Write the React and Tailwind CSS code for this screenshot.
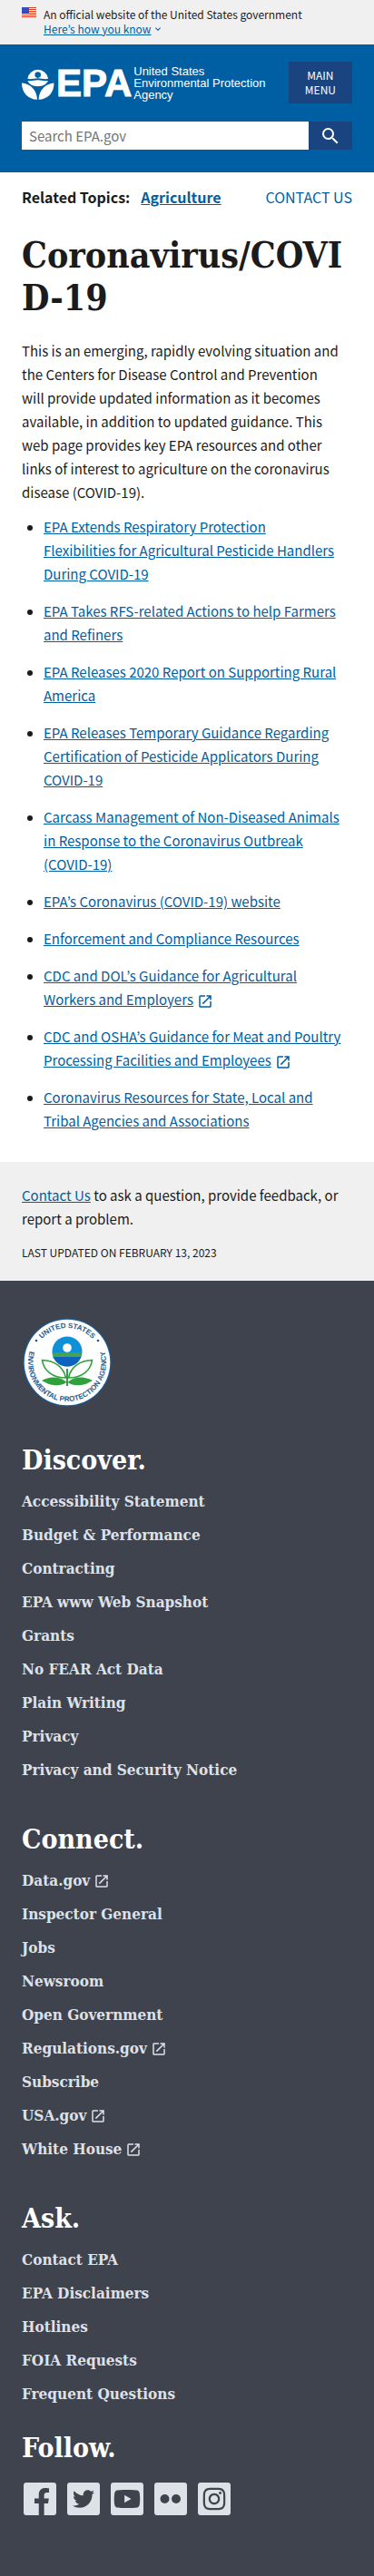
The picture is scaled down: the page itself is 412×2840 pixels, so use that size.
import { FaFacebookF, FaTwitter, FaYoutube, FaInstagram } from "react-icons/fa";
import { MdSearch, MdOpenInNew, MdExpandMore } from "react-icons/md";

const resources = [
  { text: "EPA Extends Respiratory Protection Flexibilities\u00a0for\u00a0Agricultural Pesticide Handlers During COVID-19" },
  { text: "EPA Takes RFS-related Actions to help Farmers and Refiners" },
  { text: "EPA Releases 2020 Report on Supporting Rural America" },
  { text: "EPA Releases Temporary Guidance Regarding Certification of Pesticide Applicators During COVID-19" },
  { text: "Carcass Management of Non-Diseased Animals in Response to the Coronavirus Outbreak (COVID-19)" },
  { text: "EPA’s Coronavirus (COVID-19) website" },
  { text: "Enforcement and Compliance Resources" },
  { text: "CDC and DOL’s Guidance for Agricultural Workers\u00a0and Employers", external: true },
  { text: "CDC and OSHA’s Guidance for Meat and Poultry Processing Facilities and Employees", external: true },
  { text: "Coronavirus Resources for State, Local and Tribal\u00a0Agencies and Associations" },
];

const footerGroups = [
  {
    title: "Discover.",
    links: [
      { text: "Accessibility Statement" },
      { text: "Budget & Performance" },
      { text: "Contracting" },
      { text: "EPA www Web Snapshot" },
      { text: "Grants" },
      { text: "No FEAR Act Data" },
      { text: "Plain Writing" },
      { text: "Privacy" },
      { text: "Privacy and Security Notice" },
    ],
  },
  {
    title: "Connect.",
    links: [
      { text: "Data.gov", external: true },
      { text: "Inspector General" },
      { text: "Jobs" },
      { text: "Newsroom" },
      { text: "Open Government" },
      { text: "Regulations.gov", external: true },
      { text: "Subscribe" },
      { text: "USA.gov", external: true },
      { text: "White House", external: true },
    ],
  },
  {
    title: "Ask.",
    links: [
      { text: "Contact EPA" },
      { text: "EPA Disclaimers" },
      { text: "Hotlines" },
      { text: "FOIA Requests" },
      { text: "Frequent Questions" },
    ],
  },
];

function Flag() {
  return (
    <svg viewBox="0 0 16 11" className="h-[11px] w-4 shrink-0" aria-hidden="true">
      <rect width="16" height="11" fill="#fff" />
      {[0, 2, 4, 6, 8, 10].map((y) => (
        <rect key={y} y={y} width="16" height="1" fill="#db3e1f" />
      ))}
      <rect width="8" height="7" fill="#1e33b1" />
      {[1, 3, 5].map((y) =>
        [1, 3, 5, 7].map((x) => <circle key={`${x}-${y}`} cx={x} cy={y} r="0.45" fill="#fff" />)
      )}
    </svg>
  );
}

function FlowerMark() {
  return (
    <svg viewBox="0 0 36 36" className="h-9 w-9 shrink-0" aria-hidden="true" fill="#fff">
      <path d="M6.300 12.800a11.500 11.500 0 0 1 22.800 0c-4 1-7-.6-11.400-.6s-7.400 1.600-11.400.6z" />
      <circle cx="17.700" cy="8.600" r="3.300" fill="#005ea2" />
      <path d="M6.500 15c4 .6 7-.800 11.200-.800s7.200 1.400 11.200.8c-1.200 3.600-5.400 6.200-11.200 6.200S7.700 18.600 6.500 15z" />
      <path d="M0 17.500c9.500.8 16.500 7.500 17 18.300C7 35.500 0 28.500 0 17.500z" />
      <path d="M35.500 17.500c-9.500.8-16.500 7.500-17 18.300 10-.3 17-7.300 17-18.300z" />
    </svg>
  );
}

function Seal() {
  return (
    <svg viewBox="0 0 100 100" className="h-[100px] w-[100px]" role="img" aria-label="United States Environmental Protection Agency">
      <defs>
        <path id="sealTop" d="M12 50a38 38 0 0 1 76 0" />
        <path id="sealRing" d="M19.600 19.600A43 43 0 1 0 80.400 19.600" />
        <clipPath id="bloom">
          <circle cx="50" cy="38" r="16.500" />
        </clipPath>
      </defs>
      <circle cx="50" cy="50" r="48.500" fill="#1a5f9e" />
      <circle cx="50" cy="50" r="47.300" fill="#fff" />
      <g fill="#1f5a8f" fontFamily="Liberation Sans, sans-serif" fontSize="8" fontWeight="700" textAnchor="middle">
        <text>
          <textPath href="#sealTop" startOffset="50%">UNITED STATES</textPath>
        </text>
        <text>
          <textPath href="#sealRing" startOffset="50%">ENVIRONMENTAL PROTECTION AGENCY</textPath>
        </text>
      </g>
      <circle cx="16" cy="26" r="1.300" fill="#1f5a8f" />
      <circle cx="84" cy="26" r="1.300" fill="#1f5a8f" />
      <g clipPath="url(#bloom)">
        <rect x="30" y="20" width="40" height="40" fill="#1190d8" />
        <path d="M30 40q20-2 40 0v6H30z" fill="#45a356" />
        <rect x="30" y="44" width="40" height="12" fill="#0c62bd" />
      </g>
      <circle cx="50" cy="34" r="4.800" fill="#fff" />
      <path d="M49 57h2v19h-2z" fill="#2fa13c" />
      <g fill="#fff" stroke="#2fa13c" strokeWidth="1.600">
        <path d="M48.500 67C46 55 36 48 22.500 47.500 24 59 34 67 48.500 67z" />
        <path d="M51.500 67C54 55 64 48 77.500 47.500 76 59 66 67 51.500 67z" />
      </g>
      <path d="M49.500 72C42 65 31 65 22 70c9 6 20 7 27.500 2zM50.500 72C58 65 69 65 78 70c-9 6-20 7-27.500 2z" fill="#2fa13c" />
    </svg>
  );
}

function FlickrDots() {
  return (
    <svg viewBox="0 0 36 36" className="h-9 w-9" aria-hidden="true" fill="currentColor">
      <circle cx="11.500" cy="18" r="5" />
      <circle cx="24" cy="18" r="5" />
    </svg>
  );
}

const social = [
  { name: "Facebook", icon: <FaFacebookF className="mt-[6px] ml-1 h-[30px] w-[22px]" /> },
  { name: "Twitter", icon: <FaTwitter className="h-6 w-6" /> },
  { name: "YouTube", icon: <FaYoutube className="h-[30px] w-[30px]" /> },
  { name: "Flickr", icon: <FlickrDots /> },
  { name: "Instagram", icon: <FaInstagram className="h-7 w-7" /> },
];

const link = "text-[#005ea2] underline";

export default function App() {
  return (
    <div className="min-h-screen bg-white font-['Noto_Sans_CJK_KR',sans-serif] text-[15px] leading-[26px] text-[#1b1b1b]">
      <div className="flex gap-2 bg-[#f0f0f0] px-6 pt-2 pb-[9px] text-xs leading-4">
        <Flag />
        <div>
          <p>An official website of the United States government</p>
          <button type="button" className={`flex items-center ${link}`}>
            Here’s how you know
            <MdExpandMore className="ml-[2px] h-3 w-3" />
          </button>
        </div>
      </div>

      <header className="bg-[#005ea2] px-6 pt-[19px] pb-[25px]">
        <div className="flex items-start justify-between">
          <a href="#home" className="mt-1 flex items-center whitespace-nowrap text-white">
            <FlowerMark />
            <span className="ml-[2px] font-['Liberation_Sans',sans-serif] text-[42px] leading-9 font-bold [-webkit-text-stroke:1px_white]">
              EPA
            </span>
            <span className="ml-[2px] font-['Liberation_Sans',sans-serif] text-[13px] leading-[13px]">
              United States
              <br />
              Environmental Protection
              <br />
              Agency
            </span>
          </a>
          <button type="button" className="bg-[#1a4480] px-[18px] py-[7px] text-xs leading-4 text-white">
            MAIN
            <br />
            MENU
          </button>
        </div>
        <form className="mt-5 flex">
          <input
            type="search"
            aria-label="Search EPA.gov"
            placeholder="Search EPA.gov"
            className="h-[31px] min-w-0 flex-1 bg-white px-2 text-[15px] placeholder:text-[#757575]"
          />
          <button type="submit" aria-label="Search" className="flex h-[31px] w-12 items-center justify-center bg-[#1a4480] text-white">
            <MdSearch className="h-6 w-6" />
          </button>
        </form>
      </header>

      <main className="px-6 pt-[14px] pb-8">
        <div className="flex items-center justify-between text-base leading-[26px]">
          <p className="font-bold">
            Related Topics:
            <a href="#agriculture" className={`ml-3 ${link}`}>
              Agriculture
            </a>
          </p>
          <a href="#contact" className="text-[#005ea2]">
            CONTACT US
          </a>
        </div>
        <h1 className="mt-7 font-['DejaVu_Serif_Condensed','DejaVu_Serif',serif] text-[39px] leading-[47px] font-bold break-all">
          Coronavirus/COVID-19
        </h1>
        <p className="mt-[22px]">
          This is an emerging, rapidly evolving situation and the Centers for Disease Control and Prevention
          will{"\u00a0"}provide updated information as it becomes available, in addition to updated guidance. This
          web{"\u00a0"}page provides key EPA resources and other links of interest to agriculture on the coronavirus
          disease (COVID-19).
        </p>
        <ul className="mt-3 flex list-disc flex-col gap-[15px] pl-6">
          {resources.map((item) => (
            <li key={item.text}>
              <a href="#resource" className={link}>
                {item.text}
                {item.external && <MdOpenInNew className="ml-1 inline h-[18px] w-[18px]" />}
              </a>
            </li>
          ))}
        </ul>
      </main>

      <section className="bg-[#f0f0f0] px-6 py-6">
        <p>
          <a href="#contact" className={link}>
            Contact Us
          </a>{" "}
          to ask a question, provide feedback, or report a problem.
        </p>
        <p className="mt-4 text-xs leading-[15px]">LAST UPDATED ON FEBRUARY 13, 2023</p>
      </section>

      <footer className="bg-[#3e434e] px-6 pt-10 pb-[67px] font-['DejaVu_Serif_Condensed','DejaVu_Serif',serif] text-[17px] font-bold text-[#dfe1e8]">
        <Seal />
        <div className="mt-10 flex flex-col gap-12">
          {footerGroups.map((group) => (
            <nav key={group.title} aria-label={group.title}>
              <h2 className="text-[30px] leading-9 text-white">{group.title}</h2>
              <ul className="mt-[17px] flex flex-col gap-4">
                {group.links.map((item) => (
                  <li key={item.text} className="leading-[21px]">
                    <a href="#footer" className="flex items-center">
                      {item.text}
                      {item.external && <MdOpenInNew className="ml-1 h-[18px] w-[18px]" />}
                    </a>
                  </li>
                ))}
              </ul>
            </nav>
          ))}
        </div>
        <h2 className="mt-[31px] text-[30px] leading-9 text-white">Follow.</h2>
        <ul className="mt-5 flex gap-3 pl-[2px]">
          {social.map((item) => (
            <li key={item.name}>
              <a
                href="#social"
                aria-label={item.name}
                className="flex h-9 w-9 items-center justify-center overflow-hidden rounded-[3px] bg-[#dfe1e8] text-[#3e434e]"
              >
                {item.icon}
              </a>
            </li>
          ))}
        </ul>
      </footer>
    </div>
  );
}
